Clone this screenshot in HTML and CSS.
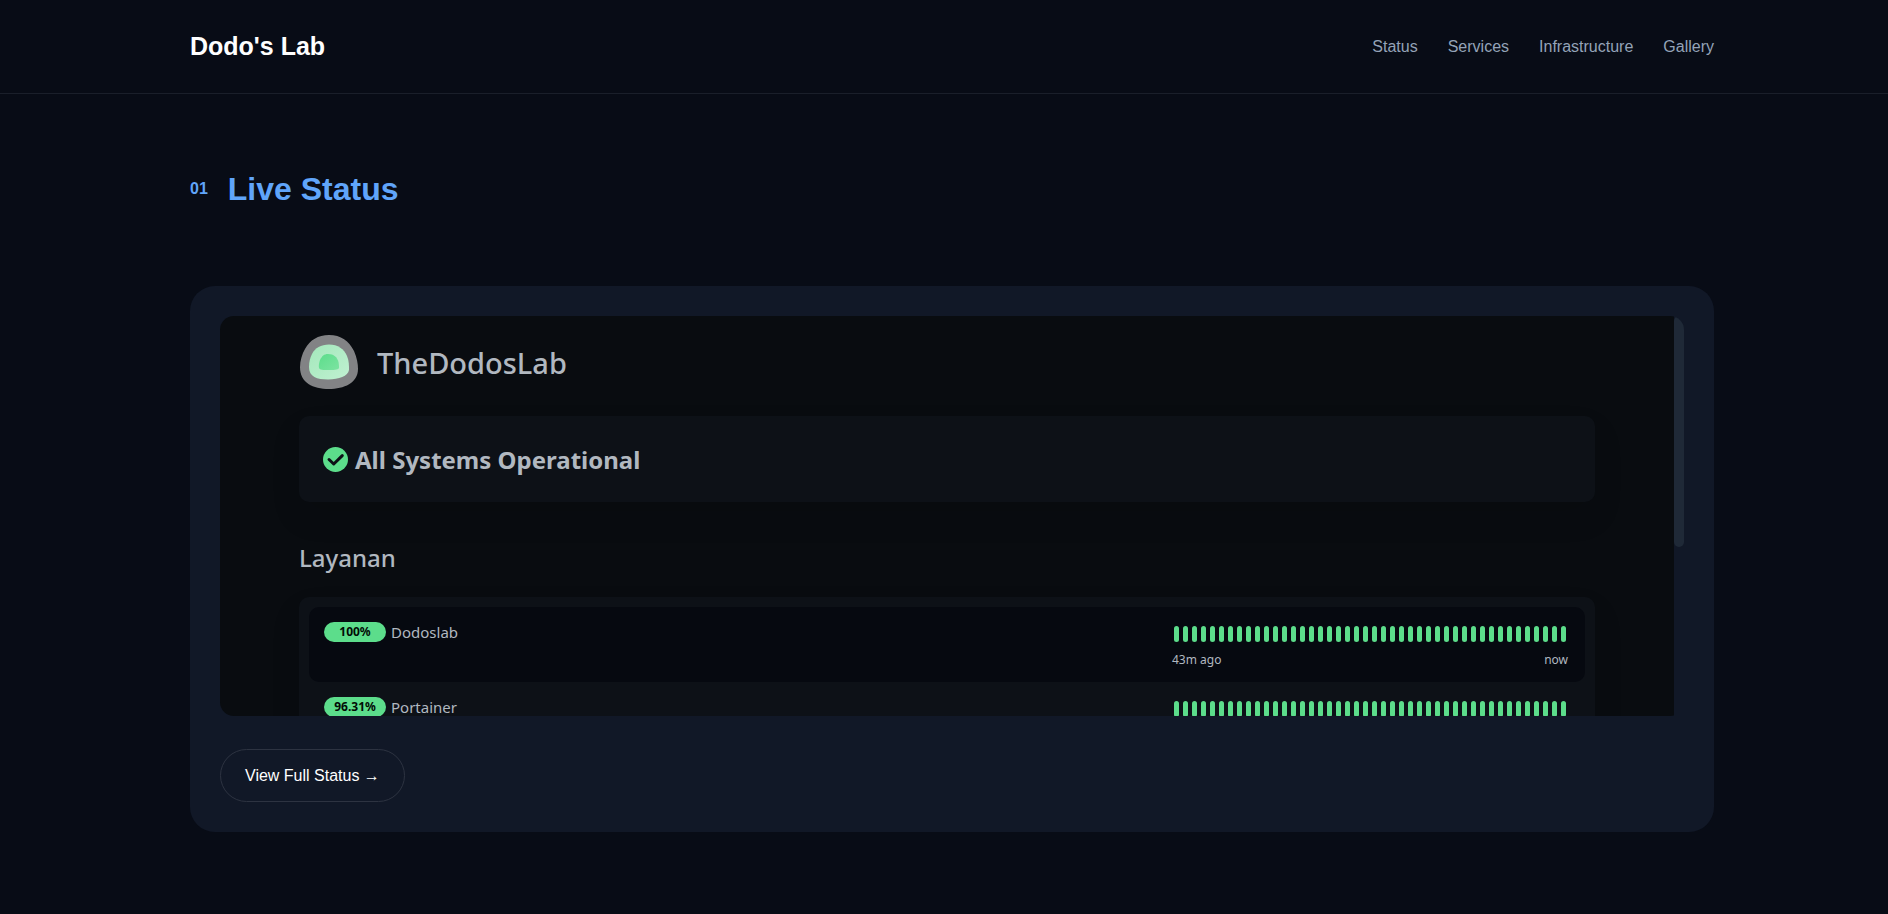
FILE: index.html
```html
<!DOCTYPE html>
<html lang="en">
<head>
  <meta charset="UTF-8">
  <meta name="viewport" content="width=device-width, initial-scale=1.0">
  <title>Dodo's Lab</title>
  <link rel="stylesheet" href="styles.css">
</head>
<body>

  <header class="navbar">
    <div class="logo">Dodo's Lab</div>
    <nav>
      <a href="#status">Status</a>
      <a href="#services">Services</a>
      <a href="#infrastructure">Infrastructure</a>
      <a href="#gallery">Gallery</a>
    </nav>
  </header>

  <section id="status">
    <div class="section-title">
      <span>01</span>
      <h2>Live Status</h2>
    </div>

    <div class="card">
      <div class="status-frame">
        <div class="status-page">
          <div class="status-header">
            <svg class="status-logo" viewBox="0 0 64 64" aria-hidden="true">
              <defs>
                <linearGradient id="leaf" x1="0" y1="0" x2="1" y2="1">
                  <stop offset="0" stop-color="#a3e8bb"/>
                  <stop offset="1" stop-color="#c0f0d1"/>
                </linearGradient>
                <linearGradient id="core" x1="0" y1="0" x2="1" y2="1">
                  <stop offset="0" stop-color="#5cdd8b"/>
                  <stop offset="1" stop-color="#7ce3a1"/>
                </linearGradient>
              </defs>
              <path d="M30 4C42 4 50 10 55 20C58 27 59 33 59 38C59 52 45 58 30 58C14 58 1 52 1 36C1 30 3 23 6 18C11 9 19 4 30 4Z" fill="#828385"/>
              <path d="M30 13.500C39 13.500 45 18 48 25C50 30 50 34 50 39C49 45 40 48.500 29 48.500C18 48.500 10 46 10 36C10 31 11 27 13 23C16 17 22 13.500 30 13.500Z" fill="url(#leaf)"/>
              <path d="M29 23C35 23 38 26 39.500 31C40 34 40 35 40 37C39 39 34 39 29 39C24 39 21 39 20 37C19.500 35 20 32 21 29C23 25 25 23 29 23Z" fill="url(#core)"/>
            </svg>
            <h1>TheDodosLab</h1>
          </div>

          <div class="overall">
            <svg class="check" viewBox="0 0 24 24" aria-hidden="true">
              <circle cx="12" cy="12" r="12" fill="#5cdd8b"/>
              <path d="M5.800 12L10.300 16.300L18.500 8.300" fill="none" stroke="#0d1117" stroke-width="2.900" stroke-linecap="round" stroke-linejoin="round"/>
            </svg>
            <span>All Systems Operational</span>
          </div>

          <h2 class="group-title">Layanan</h2>

          <div class="monitors">
            <div class="monitor active">
              <div class="info"><span class="badge">100%</span><span>Dodoslab</span></div>
              <div class="heartbeat">
                <div class="beats"></div>
                <div class="times"><span>43m ago</span><span>now</span></div>
              </div>
            </div>
            <div class="monitor">
              <div class="info"><span class="badge">96.31%</span><span>Portainer</span></div>
              <div class="heartbeat">
                <div class="beats"></div>
              </div>
            </div>
          </div>
        </div>
        <div class="scrollbar"></div>
      </div>

      <a class="btn" href="#status">View Full Status →</a>
    </div>
  </section>

  <script src="script.js"></script>
</body>
</html>
```

FILE: styles.css
```css
* {
  margin: 0;
  padding: 0;
  box-sizing: border-box;
}

body {
  background: #080c16;
  color: #fff;
  font-family: "Liberation Sans", Arial, sans-serif;
  font-size: 16px;
}

a {
  color: inherit;
  text-decoration: none;
}

.navbar {
  display: flex;
  justify-content: space-between;
  align-items: center;
  height: 94px;
  padding: 0 174px 0 190px;
  border-bottom: 1px solid #1a1f2a;
}

.logo {
  font-size: 25px;
  font-weight: bold;
}

nav {
  display: flex;
  gap: 30px;
  color: #94a3b8;
}

#status {
  padding: 70px 174px 80px 190px;
}

.section-title {
  display: flex;
  align-items: center;
  gap: 20px;
  margin-bottom: 72px;
  color: #60a5fa;
}

.section-title span {
  font-weight: bold;
}

.section-title h2 {
  font-size: 32px;
  line-height: 50px;
}

.card {
  display: flex;
  flex-direction: column;
  align-items: flex-start;
  gap: 33px;
  padding: 30px;
  border-radius: 25px;
  background: #111827;
}

.status-frame {
  display: flex;
  width: 100%;
  height: 400px;
  border-radius: 14px;
  overflow: hidden;
}

.status-page {
  flex: 1;
  padding: 15px 79px 0;
  background: #090c10;
  color: #b1b8c0;
  font-family: "Noto Sans", sans-serif;
  font-size: 15px;
  overflow: hidden;
}

.scrollbar {
  width: 10px;
  height: 231px;
  border-radius: 5px;
  background: #1f2937;
}

.status-header {
  display: flex;
  align-items: center;
  gap: 14px;
  margin-bottom: 21px;
}

.status-logo {
  width: 64px;
  height: 64px;
  flex: none;
}

.status-header h1 {
  font-size: 29px;
  font-weight: 500;
  line-height: 40px;
}

.overall {
  display: flex;
  align-items: center;
  gap: 7px;
  height: 86px;
  padding: 0 24px;
  border-radius: 10px;
  background: #0d1117;
  box-shadow: 0 15px 30px rgba(0, 0, 0, .1);
  font-size: 24px;
  font-weight: bold;
}

.check {
  width: 25px;
  height: 25px;
}

.group-title {
  margin: 39px 0 22px;
  font-size: 24px;
  font-weight: 500;
  line-height: 34px;
}

.monitors {
  padding: 10px;
  border-radius: 10px;
  background: #0d1117;
  box-shadow: 0 15px 30px rgba(0, 0, 0, .1);
}

.monitor {
  display: flex;
  justify-content: space-between;
  height: 75px;
  padding: 15px;
  border-radius: 10px;
}

.monitor.active {
  background: #060910;
}

.info {
  display: flex;
  align-items: center;
  align-self: flex-start;
  gap: 5px;
  line-height: 20px;
}

.badge {
  width: 62px;
  border-radius: 10px;
  background: #5cdd8b;
  color: #020b05;
  font-size: 12px;
  font-weight: bold;
  text-align: center;
}

.heartbeat {
  padding: 4px 2px 0 0;
}

.beats {
  display: flex;
  gap: 4px;
  padding: 0 2px;
}

.beats i {
  width: 5px;
  height: 16px;
  border-radius: 3px;
  background: #5cdd8b;
}

.times {
  display: flex;
  justify-content: space-between;
  margin-top: 9px;
  font-size: 12px;
  line-height: 18px;
}

.btn {
  padding: 0 24px;
  border: 1px solid #2d3341;
  border-radius: 27px;
  line-height: 51px;
}
```

FILE: script.js
```js
// one bar per heartbeat
document.querySelectorAll(".beats").forEach(row => {
  for (let i = 0; i < 44; i++) {
    row.appendChild(document.createElement("i"));
  }
});
```
